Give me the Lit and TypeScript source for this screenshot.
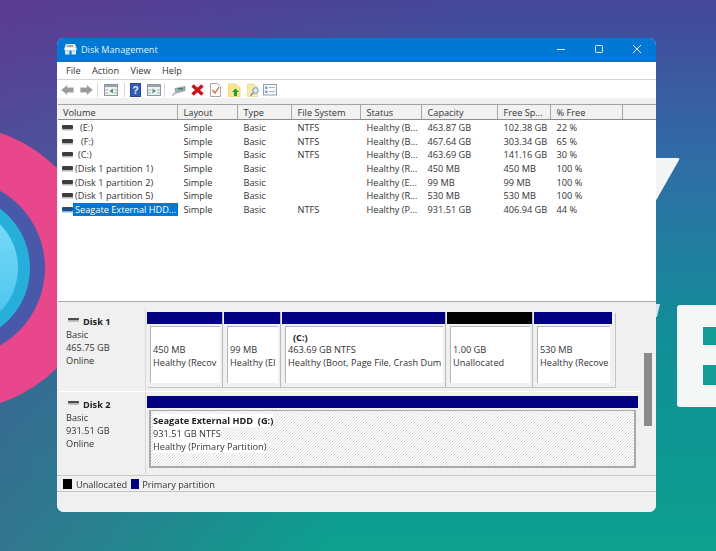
import { LitElement, html, css, svg } from "lit";
import { customElement } from "lit/decorators.js";

const rows = [
  { v: "(E:)", i: 5, l: "Simple", t: "Basic", f: "NTFS", s: "Healthy (B...", c: "463.87 GB", fr: "102.38 GB", p: "22 %" },
  { v: "(F:)", i: 6, l: "Simple", t: "Basic", f: "NTFS", s: "Healthy (B...", c: "467.64 GB", fr: "303.34 GB", p: "65 %" },
  { v: "(C:)", i: 3, l: "Simple", t: "Basic", f: "NTFS", s: "Healthy (B...", c: "463.69 GB", fr: "141.16 GB", p: "30 %" },
  { v: "(Disk 1 partition 1)", i: 0, l: "Simple", t: "Basic", f: "", s: "Healthy (R...", c: "450 MB", fr: "450 MB", p: "100 %" },
  { v: "(Disk 1 partition 2)", i: 0, l: "Simple", t: "Basic", f: "", s: "Healthy (E...", c: "99 MB", fr: "99 MB", p: "100 %" },
  { v: "(Disk 1 partition 5)", i: 0, l: "Simple", t: "Basic", f: "", s: "Healthy (R...", c: "530 MB", fr: "530 MB", p: "100 %" },
  { v: "Seagate External HDD...", i: 0, sel: true, l: "Simple", t: "Basic", f: "NTFS", s: "Healthy (P...", c: "931.51 GB", fr: "406.94 GB", p: "44 %" },
];

const parts = [
  { w: 75, lines: ["450 MB", "Healthy (Recov"] },
  { w: 56, lines: ["99 MB", "Healthy (EI"] },
  { w: 163, name: "(C:)", lines: ["463.69 GB NTFS", "Healthy (Boot, Page File, Crash Dum"] },
  { w: 85, black: true, lines: ["1.00 GB", "Unallocated"] },
  { w: 78, lines: ["530 MB", "Healthy (Recove"] },
];

const headers = ["Volume", "Layout", "Type", "File System", "Status", "Capacity", "Free Sp...", "% Free", ""];

const diskIcon = (sel = false) => html`<svg class="dk" width="11" height="7" viewBox="0 0 11 7">
  <rect x="0" y="1" width="11" height="4" rx="1" fill=${sel ? "#1c4f80" : "#3d3d3d"}></rect>
  <rect x="0" y="5" width="11" height="1.5" fill=${sel ? "#7fb4de" : "#b9b9b9"}></rect>
</svg>`;

const labelDisk = html`<svg class="dk up" width="11" height="6" viewBox="0 0 11 6">
  <rect x="0" y="1" width="11" height="2.500" rx=".8" fill="#4a4a4a"></rect>
  <rect x="0" y="3.500" width="11" height="1.500" fill="#c2c2c2"></rect>
</svg>`;

const tb = (w: number, body: unknown, vb = w) => html`<svg width=${w} height="14" viewBox="0 0 ${vb} 14">${body}</svg>`;

const pane = (green: string) => svg`
  <rect x=".5" y="1.500" width="13" height="11" fill="#eef0f2" stroke="#8d97a3"></rect>
  <rect x="1" y="2" width="12" height="2" fill="#9aa4b0"></rect>
  <path d="M1 7h3M1 10h3M10 7h3M10 10h3" stroke="#aab2bb"></path>
  <path d=${green} fill="#3ca35a"></path>`;

const sep = html`<i class="sep"></i>`;

/* gap = the space before each toolbar item */
const tools = [
  { g: 0, n: tb(13, svg`<path d="M0.5 7 6.500 2V4.500H13.500V9.500H6.500V12Z" fill="#9a9a9a" stroke="#b8b8b8" stroke-width=".6"></path>`, 14) },
  { g: 6, n: tb(13, svg`<path d="M13.500 7 7.500 2V4.500H.5V9.500H7.500V12Z" fill="#9a9a9a" stroke="#b8b8b8" stroke-width=".6"></path>`, 14) },
  { g: 4, n: sep },
  { g: 6, n: tb(14, pane("M9 5.500V10.500L5.500 8Z")) },
  { g: 6, n: sep },
  { g: 5, n: tb(11, svg`<rect x=".5" y=".5" width="10" height="13" fill="#2f5fb5" stroke="#24478f"></rect><text x="5.500" y="11" font-size="10" font-weight="700" text-anchor="middle" fill="#e6eefc" font-family="Liberation Sans, sans-serif">?</text>`) },
  { g: 6, n: tb(14, pane("M5.500 5.500V10.500L9 8Z")) },
  { g: 3, n: sep },
  { g: 7, n: tb(14, svg`<path d="M3 5.500 13 3.500V7.500L4 10Z" fill="#9fb1bd" stroke="#6f7f8a" stroke-width=".6"></path><rect x="6" y="5" width="5" height="1.500" fill="#2f8f5a"></rect><path d="M4 9 .5 12.500" stroke="#9aa6ad" stroke-width="1.500"></path>`) },
  { g: 5, n: tb(13, svg`<path d="M1.500 2.500 11.500 11.500M11.500 2.500 1.500 11.500" stroke="#c8141c" stroke-width="3.400"></path>`) },
  { g: 6, n: tb(11, svg`<path d="M.5.5H7.500L10.500 3.500V13.500H.5Z" fill="#fbfbfb" stroke="#a9a9a9"></path><path d="M2.500 7 5 10 9 4" fill="none" stroke="#d9592c" stroke-width="1.200"></path>`) },
  { g: 7, n: tb(13, svg`<path d="M.5 1H7.500L12 4.500V13.500H.5Z" fill="#fbe58b" stroke="#e3c860" stroke-width=".6"></path><path d="M7.500 5.500 11 9H9V13H6V9H4Z" fill="#1f9a3f"></path>`) },
  { g: 6, n: tb(14, svg`<path d="M.5 1H7L10.500 4V13.500H.5Z" fill="#fbe9a6" stroke="#e3cf80" stroke-width=".6"></path><circle cx="8.500" cy="7.500" r="2.800" fill="#dcecf7" stroke="#6f93b3"></circle><path d="M6.500 9.500 3.500 12.800" stroke="#6f93b3" stroke-width="1.500"></path>`) },
  { g: 2, n: tb(14, svg`<rect x=".5" y="1.500" width="13" height="10.500" fill="#f7f9fb" stroke="#8fa1b1"></rect><rect x="2" y="3.500" width="2.500" height="2.500" fill="#7ea4c6"></rect><rect x="2" y="7.500" width="2.500" height="2.500" fill="#7ea4c6"></rect><path d="M6 4.500h6M6 8.500h6" stroke="#a9b5bf"></path>`) },
];

@customElement("app-root")
export class AppRoot extends LitElement {
  static styles = css`
    :host {
      display: block;
      position: relative;
      width: 716px;
      height: 551px;
      overflow: hidden;
      box-sizing: border-box;
      padding: 38px 60px 39px 57px;
      font-family: "Open Sans", "Noto Sans", sans-serif;
      font-size: 9.2px;
      color: #333;
      background:
        linear-gradient(105deg, rgba(110, 50, 140, 0.55) 0%, rgba(110, 50, 140, 0) 55%),
        linear-gradient(180deg, #45479a 0%, #2f6ea6 30%, #108f97 62%, #0da08f 100%);
    }
    .deco { position: absolute; border-radius: 50%; }
    .d1 { left: -186px; top: 126px; width: 284px; height: 284px; background: #e8478b; }
    .d2 { left: -133px; top: 179px; width: 178px; height: 178px; background: #4a58aa; }
    .d3 { left: -118px; top: 194px; width: 148px; height: 148px; background: #27afdc; }
    .d4 { left: -106px; top: 206px; width: 124px; height: 124px; background: linear-gradient(#7fdcfa, #45c3ea); }
    .tri { position: absolute; left: 650px; top: 158px; }
    .tri2 { position: absolute; left: 650px; top: 304px; }
    .e { position: absolute; left: 677px; top: 305px; width: 60px; height: 102px; background: #f4f7f6; border-radius: 3px; }
    .e i { position: absolute; left: 26px; width: 40px; background: #139b96; }
    .e i:first-child { top: 22px; height: 18px; }
    .e i:last-child { top: 60px; height: 20px; }

    .win {
      position: relative;
      height: 474px;
      display: flex;
      flex-direction: column;
      border-radius: 7px;
      overflow: hidden;
      background: #f0f0f0;
      filter: blur(0.3px);
    }
    .title { height: 24px; box-sizing: border-box; padding: 0 2px 2px 7px; background: #0078d4; color: #e4f1fb; display: flex; align-items: center; gap: 4px; font-size: 9.100px; }
    .title span { flex: 1; }
    .ctl { width: 34px; display: flex; justify-content: center; }
    .menu { height: 17px; background: #fff; display: flex; align-items: center; border-bottom: 1px solid #d4d4d4; padding-left: 9px; gap: 11.500px; }
    .toolbar { height: 18px; box-sizing: border-box; padding: 2px 0 0 4px; background: #fff; display: flex; align-items: center; }
    .toolbar svg { display: block; }
    .sep { display: block; width: 1px; height: 14px; background: #d8d8d8; }
    .band { height: 6px; background: #f0f0f0; }
    .cols { display: grid; grid-template-columns: 120px 60px 54px 69px 61px 76px 53px 72px 1fr; }
    .head { margin-left: 1px; height: 14px; background: #f1f1f1; border-top: 1px solid #a4a4a4; border-bottom: 1px solid #8c8c8c; align-items: center; }
    .head div { height: 100%; display: flex; align-items: center; padding-left: 5.500px; border-right: 1px solid #a8a8a8; box-sizing: border-box; }
    .head div:first-child { padding-left: 5px; }
    .head div:last-child { border-right: none; }
    .list { margin-left: 1px; height: 182px; background: #fff; border-bottom: 1px solid #a8a8a8; padding-top: 1px; box-sizing: border-box; }
    .row { height: 13.600px; align-items: center; }
    .row div { padding-left: 5.500px; white-space: nowrap; overflow: hidden; }
    .row .vol { display: flex; align-items: center; padding-left: 4px; }
    .dk { flex: none; }
    .up { position: relative; top: -2px; }
    .nm { flex: 1; height: 13px; line-height: 13px; }
    .nm.sel { background: #0078d7; color: #fff; }

    .area { flex: 1; display: flex; padding-top: 7px; }
    .disks { flex: 1; display: flex; flex-direction: column; padding-left: 2px; }
    .disk { display: flex; gap: 1px; }
    .d-1 { height: 82px; }
    .d-2 { height: 83px; border-top: 1px solid #fff; box-sizing: border-box; }
    .info { width: 87px; background: #f0f0f0; border-right: 1px solid #d8d8d8; padding: 6px 0 0 7px; box-sizing: border-box; line-height: 12.800px; }
    .dn { font-weight: 700; color: #222; display: flex; align-items: center; gap: 4px; padding-left: 2px; height: 14px; }
    .pw { padding-top: 3px; }
    .d-2 .pw { padding-top: 4px; }
    .plist { display: flex; gap: 2px; padding-right: 3px; height: 75px; box-shadow: 1px 1px 0 #c4c4c4; }
    .part { display: flex; flex-direction: column; box-shadow: 1px 0 0 #bbb; }
    .part:last-child { box-shadow: none; }
    .bar { height: 12px; background: #000080; flex: none; }
    .bar.k { background: #000; }
    .box { margin: 2px 2px 4px 3px; flex: 1; background: #fff; border-top: 1px solid #b5b5b5; border-left: 1px solid #b5b5b5; padding: 4.500px 0 0 2px; line-height: 12.800px; white-space: nowrap; overflow: hidden; display: flex; flex-direction: column; justify-content: flex-start; }
    .b { font-weight: 700; color: #222; padding-left: 5px; }
    .top { height: 12.800px; flex: none; }
    .large { width: 491px; display: flex; flex-direction: column; }
    .hatch {
      margin: 2px 2px 0;
      height: 58px;
      box-sizing: border-box;
      border: 2px solid #a9a9a9;
      border-top-width: 1px;
      padding: 3px 0 0 2px;
      line-height: 13px;
      background: repeating-linear-gradient(135deg, #fff 0 1.4142px, #dadada 1.4142px 2.1213px);
      display: flex;
      flex-direction: column;
      align-items: flex-start;
    }
    .hatch span { background: #fff; }
    .hatch .bb { font-weight: 700; color: #222; }
    .track { width: 15px; flex: none; }
    .thumb { width: 8px; height: 73px; margin: 44px 0 0 3px; background: #8a8a8a; }
    .legend { height: 17px; box-sizing: border-box; padding: 1px 0 0 6px; border-top: 1px solid #c8c8c8; border-bottom: 1px solid #c4c4c4; display: flex; align-items: center; }
    .sw { width: 9px; height: 10px; margin-right: 4px; }
    .sw.k { background: #000; }
    .sw.n { width: 8px; background: #000080; margin: 0 3px 0 4px; }
    .status { height: 20px; background: #f0f0f0; flex: none; }
  `;

  render() {
    return html`
      <div class="deco d1"></div><div class="deco d2"></div><div class="deco d3"></div><div class="deco d4"></div>
      <svg class="tri" width="30" height="48" viewBox="0 0 30 48"><path d="M0 0H28Q30 0 29 2L4 46H0Z" fill="#f4f6f6"></path></svg>
      <svg class="tri2" width="10" height="14" viewBox="0 0 10 14"><path d="M0 0H10L7 13H0Z" fill="#cfe3ea"></path></svg>
      <div class="e"><i></i><i></i></div>

      <div class="win">
        <div class="title">
          <svg width="13" height="12" viewBox="0 0 13 12">
            <path d="M2 1H11L12.500 5H.5Z" fill="#e8e8e8"></path>
            <rect x=".5" y="5" width="12" height="2.500" fill="#fff"></rect>
            <rect x="1" y="7.500" width="4.500" height="4" fill="#dfe7ee"></rect>
            <rect x="7.500" y="7.500" width="4.500" height="4" fill="#dfe7ee"></rect>
            <rect x="3" y="2.500" width="6" height="1" fill="#667"></rect>
          </svg>
          <span>Disk Management</span>
          <div class="ctl"><svg width="10" height="10" viewBox="0 0 10 10"><path d="M1 5.500H9" stroke="#dff0fc"></path></svg></div>
          <div class="ctl"><svg width="10" height="10" viewBox="0 0 10 10"><rect x="1.500" y="1.500" width="7" height="7" rx=".8" fill="none" stroke="#dff0fc"></rect></svg></div>
          <div class="ctl"><svg width="10" height="10" viewBox="0 0 10 10"><path d="M1 1 9 9M9 1 1 9" stroke="#dff0fc"></path></svg></div>
        </div>
        <div class="menu"><span>File</span><span>Action</span><span>View</span><span>Help</span></div>
        <div class="toolbar">${tools.map((t) => html`<span style="margin-left:${t.g}px">${t.n}</span>`)}</div>
        <div class="band"></div>
        <div class="cols head">${headers.map((h) => html`<div>${h}</div>`)}</div>
        <div class="list">
          ${rows.map((r) => html`<div class="cols row">
            <div class="vol">${diskIcon(r.sel)}<span class="nm ${r.sel ? "sel" : ""}" style="padding-left:${2 + r.i}px">${r.v}</span></div>
            <div>${r.l}</div><div>${r.t}</div><div>${r.f}</div><div>${r.s}</div><div>${r.c}</div><div>${r.fr}</div><div>${r.p}</div><div></div>
          </div>`)}
        </div>
        <div class="area">
          <div class="disks">
            <div class="disk d-1">
              <div class="info">
                <div class="dn">${labelDisk}Disk 1</div>
                <div>Basic</div><div>465.75 GB</div><div>Online</div>
              </div>
              <div class="pw"><div class="plist">
                ${parts.map((p) => html`<div class="part" style="width:${p.w}px">
                  <div class="bar ${p.black ? "k" : ""}"></div>
                  <div class="box">
                    ${p.name ? html`<div class="b">${p.name}</div>` : html`<div class="top"></div>`}
                    ${p.lines.map((l) => html`<div>${l}</div>`)}
                  </div>
                </div>`)}
              </div></div>
            </div>
            <div class="disk d-2">
              <div class="info">
                <div class="dn">${labelDisk}Disk 2</div>
                <div>Basic</div><div>931.51 GB</div><div>Online</div>
              </div>
              <div class="pw"><div class="large">
                <div class="bar"></div>
                <div class="hatch">
                  <span class="bb">Seagate External HDD&nbsp; (G:)</span>
                  <span>931.51 GB NTFS</span>
                  <span>Healthy (Primary Partition)</span>
                </div>
              </div></div>
            </div>
          </div>
          <div class="track"><div class="thumb"></div></div>
        </div>
        <div class="legend"><i class="sw k"></i><span>Unallocated</span><i class="sw n"></i><span>Primary partition</span></div>
        <div class="status"></div>
      </div>
    `;
  }
}
